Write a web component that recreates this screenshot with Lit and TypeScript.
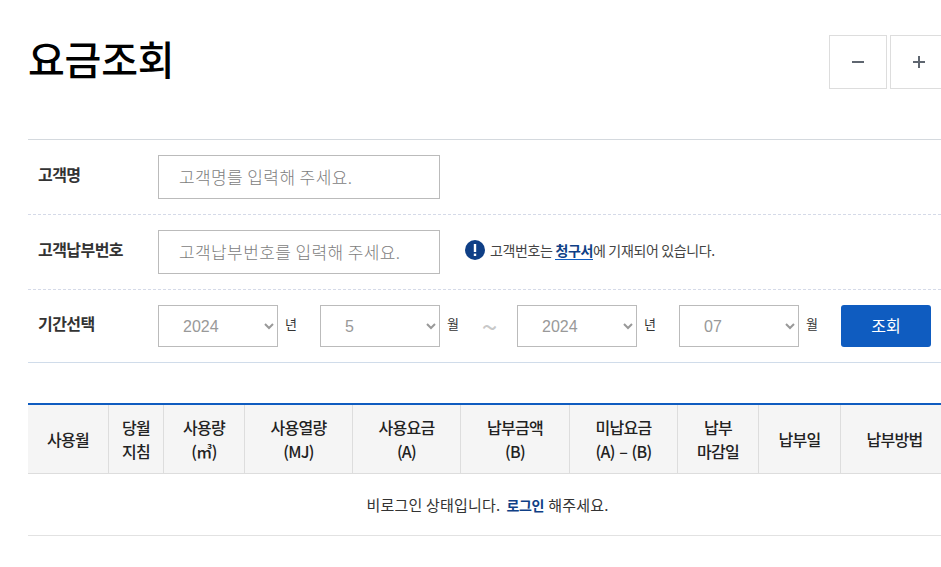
import { LitElement, html, css } from "lit";
import { customElement } from "lit/decorators.js";

const cols: [number, string[]][] = [
  [81, ["사용월"]],
  [55, ["당월", "지침"]],
  [81, ["사용량", "(㎥)"]],
  [108, ["사용열량", "(MJ)"]],
  [108, ["사용요금", "(A)"]],
  [109, ["납부금액", "(B)"]],
  [108, ["미납요금", "(A) – (B)"]],
  [81, ["납부", "마감일"]],
  [82, ["납부일"]],
  [107, ["납부방법"]],
];

@customElement("app-root")
export class AppRoot extends LitElement {
  static styles = css`
    :host {
      display: block;
      width: 941px;
      height: 567px;
      overflow: hidden;
      background: #fff;
      font-family: "Noto Sans CJK KR", "Noto Sans", sans-serif;
      color: #333;
    }
    .page { width: 1000px; padding: 0 0 0 28px; box-sizing: border-box; }
    .head { height: 139px; display: flex; align-items: flex-start; justify-content: space-between; width: 920px; box-sizing: border-box; padding-top: 35px; }
    h1 { margin: -3px 0 0; font-size: 40px; line-height: 52px; font-weight: 500; color: #000; letter-spacing: -0.2px; }
    .zoom { display: flex; gap: 3px; }
    .zoom button { width: 58px; height: 54px; padding: 0; background: #fff; border: 1px solid #ddd; display: flex; align-items: center; justify-content: center; }
    form { width: 913px; border-top: 1px solid #d4d9de; border-bottom: 1px solid #d0dcea; }
    .row { display: flex; align-items: flex-start; box-sizing: border-box; }
    .row.r1 { height: 75px; padding-top: 15px; border-bottom: 1px dashed #d5dae8; }
    .row.r3 { height: 72px; padding-top: 15px; }
    .lab { width: 120px; margin-left: 10px; font-size: 16px; font-weight: 700; line-height: 38px; letter-spacing: -0.55px; color: #333; }
    .r3 .lab { line-height: 36px; }
    input { width: 282px; height: 44px; box-sizing: border-box; border: 1px solid #bbb; padding: 0 0 2px 20px; font: 300 17px "Noto Sans CJK KR", sans-serif; letter-spacing: 0.4px; outline: none; background: #fff; color: #333; }
    input::placeholder { color: #7d7d7d; opacity: 1; }
    .hint { display: flex; align-items: center; height: 40px; margin-left: 25px; font-size: 14px; letter-spacing: -0.35px; color: #444; }
    .hint svg { margin-right: 5px; }
    .hint a { color: #0f3f86; font-weight: 700; border-bottom: 1px solid #0f5cc0; line-height: 18px; }
    select { width: 120px; height: 42px; box-sizing: border-box; border: 1px solid #bbb; background: #fff; color: #999; padding-left: 20px; font: 16px "Liberation Sans", sans-serif; border-radius: 0; outline: none; }
    .unit { width: 42px; font-size: 13px; line-height: 38px; padding-left: 7px; box-sizing: border-box; color: #333; }
    .tilde { width: 35px; margin-left: -10px; margin-right: 10px; text-align: center; color: #c8c8c8; font: 28px/42px "Noto Sans CJK KR", sans-serif; }
    .search { width: 90px; height: 42px; border: 0; border-radius: 3px; background: #0f5cc0; color: #fff; font: 16px "Noto Sans CJK KR", sans-serif; margin-left: 0; padding: 0 0 3px; }
    .table { margin-top: 40px; width: 922px; border-top: 2px solid #0f5cc0; }
    .thead { display: flex; background: #f5f5f5; border-bottom: 1px solid #ddd; height: 69px; box-sizing: border-box; }
    .th { flex: none; box-sizing: border-box; border-right: 1px solid #ddd; display: flex; flex-direction: column; align-items: center; justify-content: center; font-size: 16px; line-height: 24px; font-weight: 500; color: #222; letter-spacing: -0.7px; word-spacing: 1.5px; padding-bottom: 1px; }
    .th:last-child { border-right: 0; }
    .empty { width: 913px; height: 62px; box-sizing: border-box; border-bottom: 1px solid #e2e2e2; display: flex; align-items: center; justify-content: center; font-size: 15px; letter-spacing: 0.2px; color: #333; padding-left: 6px; }
    .empty a { color: #0f3f86; font-weight: 700; margin: 0 4px 0 6px; font-size: 14px; letter-spacing: -0.3px; }
  `;

  private unit(t: string) {
    return html`<span class="unit">${t}</span>`;
  }
  private sel(v: string) {
    return html`<select><option>${v}</option></select>`;
  }

  render() {
    return html`
      <div class="page">
        <div class="head">
          <h1>요금조회</h1>
          <div class="zoom">
            <button aria-label="축소"><svg width="14" height="14" viewBox="0 0 14 14"><path d="M1 7h12" stroke="#5f6670" stroke-width="2"/></svg></button>
            <button aria-label="확대"><svg width="14" height="14" viewBox="0 0 14 14"><path d="M1 7h12M7 1v12" stroke="#5f6670" stroke-width="2"/></svg></button>
          </div>
        </div>
        <form>
          <div class="row r1">
            <span class="lab">고객명</span>
            <input placeholder="고객명를 입력해 주세요." />
          </div>
          <div class="row r1">
            <span class="lab">고객납부번호</span>
            <input placeholder="고객납부번호를 입력해 주세요." />
            <span class="hint">
              <svg width="20" height="20" viewBox="0 0 20 20"><circle cx="10" cy="10" r="10" fill="#0f3f86"/><path d="M10 4v8" stroke="#fff" stroke-width="2.4"/><rect x="8.8" y="13.6" width="2.4" height="2.4" fill="#fff"/></svg>
              고객번호는&nbsp;<a>청구서</a>에 기재되어 있습니다.
            </span>
          </div>
          <div class="row r3">
            <span class="lab">기간선택</span>
            ${this.sel("2024")}${this.unit("년")}
            ${this.sel("5")}${this.unit("월")}
            <span class="tilde">~</span>
            ${this.sel("2024")}${this.unit("년")}
            ${this.sel("07")}${this.unit("월")}
            <button class="search" type="button">조회</button>
          </div>
        </form>
        <div class="table">
          <div class="thead">
            ${cols.map(
              ([w, lines]) => html`<div class="th" style="width:${w}px">${lines.map((l) => html`<span>${l}</span>`)}</div>`
            )}
          </div>
          <div class="empty">비로그인 상태입니다.<a>로그인</a>해주세요.</div>
        </div>
      </div>
    `;
  }
}
